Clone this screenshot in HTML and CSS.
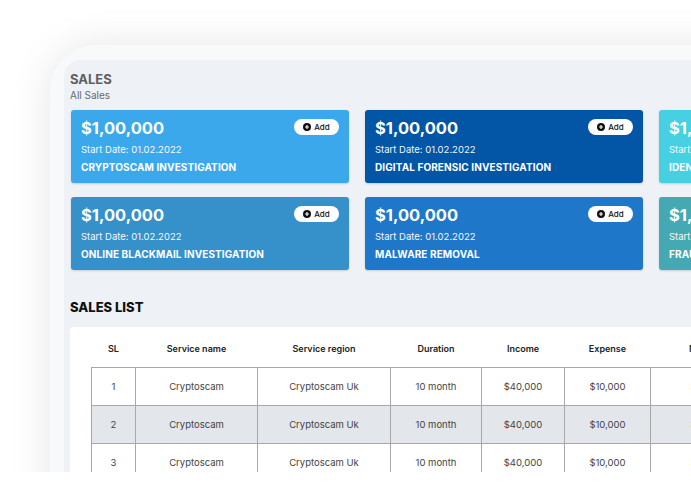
FILE: index.html
```html
<!DOCTYPE html>
<html>
<head>
<meta charset="utf-8">
<link rel="stylesheet" href="styles.css">
</head>
<body>
<div class="stage">
  <div class="device">
    <div class="screen">
      <div class="page-head">
        <h1 class="title">SALES</h1>
        <div class="subtitle">All Sales</div>
      </div>
      <div class="cards">
        <div class="card c1">
          <div class="card-top"><span class="amount">$1,00,000</span><span class="add"><svg class="add-ico" viewBox="0 0 10 10"><circle cx="5" cy="5" r="5" fill="#111"/><path d="M5 2.6v4.8M2.6 5h4.8" stroke="#fff" stroke-width="1.4"/></svg>Add</span></div>
          <div class="date">Start Date: 01.02.2022</div>
          <div class="name">CRYPTOSCAM INVESTIGATION</div>
        </div>
        <div class="card c2">
          <div class="card-top"><span class="amount">$1,00,000</span><span class="add"><svg class="add-ico" viewBox="0 0 10 10"><circle cx="5" cy="5" r="5" fill="#111"/><path d="M5 2.6v4.8M2.6 5h4.8" stroke="#fff" stroke-width="1.4"/></svg>Add</span></div>
          <div class="date">Start Date: 01.02.2022</div>
          <div class="name">DIGITAL FORENSIC INVESTIGATION</div>
        </div>
        <div class="card c3">
          <div class="card-top"><span class="amount">$1,00,000</span><span class="add"><svg class="add-ico" viewBox="0 0 10 10"><circle cx="5" cy="5" r="5" fill="#111"/><path d="M5 2.6v4.8M2.6 5h4.8" stroke="#fff" stroke-width="1.4"/></svg>Add</span></div>
          <div class="date">Start Date: 01.02.2022</div>
          <div class="name">IDENTITY THEFT INVESTIGATION</div>
        </div>
        <div class="card c4">
          <div class="card-top"><span class="amount">$1,00,000</span><span class="add"><svg class="add-ico" viewBox="0 0 10 10"><circle cx="5" cy="5" r="5" fill="#111"/><path d="M5 2.6v4.8M2.6 5h4.8" stroke="#fff" stroke-width="1.4"/></svg>Add</span></div>
          <div class="date">Start Date: 01.02.2022</div>
          <div class="name">ONLINE BLACKMAIL INVESTIGATION</div>
        </div>
        <div class="card c5">
          <div class="card-top"><span class="amount">$1,00,000</span><span class="add"><svg class="add-ico" viewBox="0 0 10 10"><circle cx="5" cy="5" r="5" fill="#111"/><path d="M5 2.6v4.8M2.6 5h4.8" stroke="#fff" stroke-width="1.4"/></svg>Add</span></div>
          <div class="date">Start Date: 01.02.2022</div>
          <div class="name">MALWARE REMOVAL</div>
        </div>
        <div class="card c6">
          <div class="card-top"><span class="amount">$1,00,000</span><span class="add"><svg class="add-ico" viewBox="0 0 10 10"><circle cx="5" cy="5" r="5" fill="#111"/><path d="M5 2.6v4.8M2.6 5h4.8" stroke="#fff" stroke-width="1.4"/></svg>Add</span></div>
          <div class="date">Start Date: 01.02.2022</div>
          <div class="name">FRAUD INVESTIGATION</div>
        </div>
      </div>
      <h2 class="list-title">SALES LIST</h2>
      <div class="table-card">
        <table class="sales">
          <thead>
            <tr><th class="w-sl">SL</th><th class="w-name">Service name</th><th class="w-region">Service region</th><th class="w-dur">Duration</th><th class="w-inc">Income</th><th class="w-exp">Expense</th><th class="w-net">Net profit</th></tr>
          </thead>
          <tbody>
            <tr><td>1</td><td>Cryptoscam</td><td>Cryptoscam Uk</td><td>10 month</td><td>$40,000</td><td>$10,000</td><td>$30,000</td></tr>
            <tr class="alt"><td>2</td><td>Cryptoscam</td><td>Cryptoscam Uk</td><td>10 month</td><td>$40,000</td><td>$10,000</td><td>$30,000</td></tr>
            <tr><td>3</td><td>Cryptoscam</td><td>Cryptoscam Uk</td><td>10 month</td><td>$40,000</td><td>$10,000</td><td>$30,000</td></tr>
          </tbody>
        </table>
      </div>
    </div>
  </div>
</div>
</body>
</html>
```
FILE: styles.css
```css
* { box-sizing: border-box; }
html, body { margin: 0; padding: 0; background: #fff; }
body { font-family: "Inter", "Open Sans", sans-serif; width: 691px; height: 488px; overflow: hidden; }

.stage {
  width: 691px;
  height: 472px;
  overflow: hidden;
  padding: 45px 0 0 50px;
}
.device {
  width: 900px;
  height: 600px;
  background: #f8f9fa;
  border-radius: 46px 0 0 0;
  padding: 15px 0 0 14px;
  box-shadow: 0 0 40px rgba(0, 0, 0, 0.1);
}
.screen {
  height: 100%;
  background: #eef1f5;
  border-radius: 16px 0 0 0;
  padding: 11px 0 0 6px;
}

.page-head { overflow: hidden; }
.title {
  margin: 0;
  font-size: 13px;
  font-weight: 700;
  color: #606060;
  line-height: 16px;
}
.subtitle {
  font-size: 10px;
  color: #6a6a6a;
  line-height: 14px;
  margin-top: 1px;
}

.cards {
  display: grid;
  grid-template-columns: repeat(3, 278px);
  grid-auto-rows: 73px;
  gap: 14px 16px;
  margin-top: 8px;
  padding-left: 1px;
}
.card {
  border-radius: 3px;
  color: #fff;
  padding: 8px 10px 0 10px;
  box-shadow: 0 1px 2px rgba(0, 0, 0, 0.15);
}
.c1 { background: #3ba8ec; }
.c2 { background: #0355a6; }
.c3 { background: #46d0e1; }
.c4 { background: #3690c9; }
.c5 { background: #1f77c9; }
.c6 { background: #44a9b3; }

.card-top {
  display: flex;
  justify-content: space-between;
  align-items: flex-start;
  height: 22px;
}
.amount {
  font-size: 16.5px;
  font-weight: 700;
  line-height: 20px;
}
.add {
  display: flex;
  align-items: center;
  justify-content: center;
  gap: 3px;
  margin-top: 1px;
  width: 45px;
  height: 16px;
  border-radius: 8px;
  background: #fff;
  color: #111;
  font-size: 8px;
  font-weight: 500;
}
.add-ico { width: 8px; height: 8px; }
.date {
  font-size: 9.5px;
  line-height: 12px;
  margin-top: 4px;
  opacity: 0.95;
}
.name {
  font-size: 10px;
  font-weight: 700;
  line-height: 13px;
  margin-top: 5px;
  letter-spacing: 0.1px;
}

.list-title {
  margin: 29px 0 0 0;
  font-size: 13px;
  font-weight: 800;
  color: #111;
  line-height: 16px;
}
.table-card {
  margin-top: 12px;
  background: #fff;
  border-radius: 4px 0 0 0;
  padding: 0 0 0 21px;
  width: 740px;
  height: 200px;
}
.sales {
  border-collapse: collapse;
  font-size: 9.5px;
  color: #333;
  text-align: center;
}
.sales th {
  height: 40px;
  font-weight: 600;
  font-size: 9px;
  color: #222;
  padding: 4px 0 0 0;
}
.sales td {
  height: 38px;
  border: 1px solid #a8a8a8;
  color: #444;
  padding: 0;
}
.sales tr.alt td { background: #e3e6eb; }
.w-sl { width: 44px; }
.w-name { width: 122px; }
.w-region { width: 133px; }
.w-dur { width: 91px; }
.w-inc { width: 83px; }
.w-exp { width: 86px; }
.w-net { width: 118px; }
```
